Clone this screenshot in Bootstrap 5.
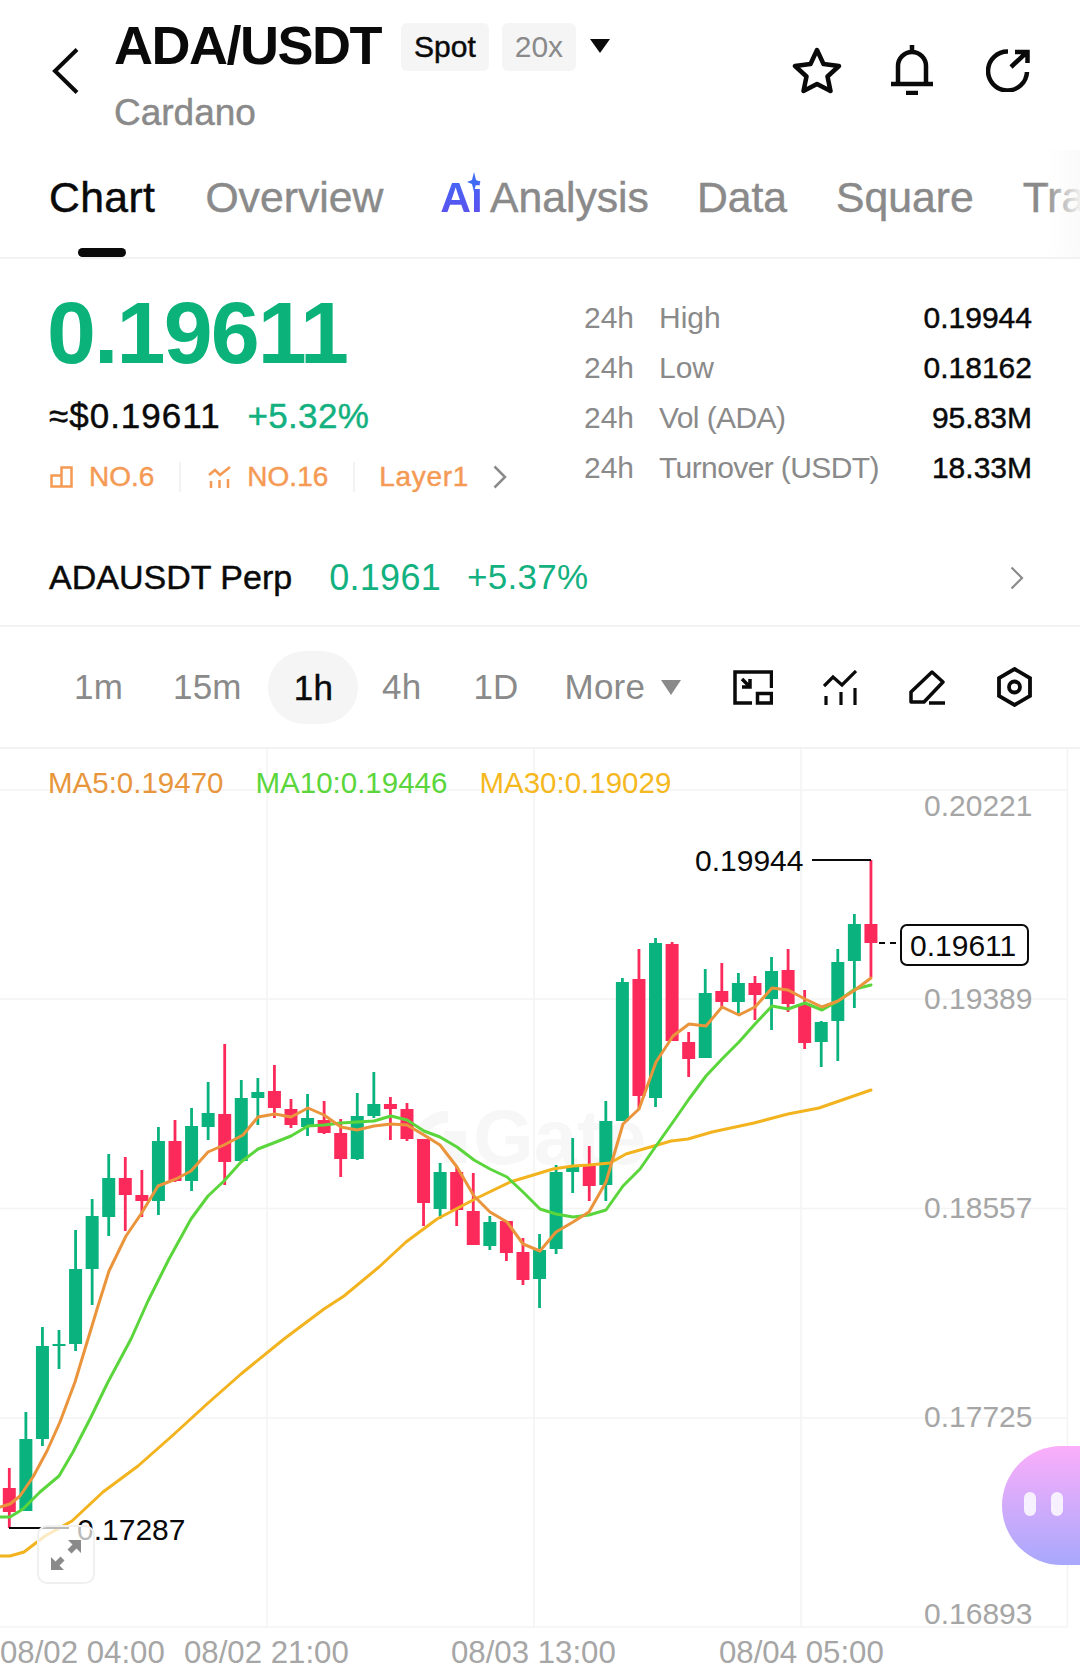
<!DOCTYPE html>
<html lang="en">
<head>
  <meta charset="UTF-8">
  <title>ADA/USDT</title>
  <link href="https://cdn.jsdelivr.net/npm/bootstrap@5.3.2/dist/css/bootstrap.min.css" rel="stylesheet">
  <style>
    body { background: #fff; color: #0a0a0a; font-family: "Liberation Sans", Arial, sans-serif; width: 1080px; height: 1671px; overflow: hidden; }
    .soft { -webkit-text-stroke: .45px currentColor; }
    .gray-t { color: #8a8a8a; }
    .up-t { color: #13b17f; }
    .hdr { height: 150px; padding: 15px 50px 0 52px; }
    .back-ic { margin: 33px 35px 0 0; }
    .pair { font-size: 54px; line-height: 60px; font-weight: 700; letter-spacing: -1.5px; margin: 0 20px 0 0; }
    .chip { background: #f5f5f5; border-radius: 6px; font-size: 30px; height: 48px; line-height: 48px; padding: 0 13px; margin-top: 3px; }
    .chip-gap { margin-left: 13px; }
    .chip-caret { margin: 2px 0 0 14px; }
    .coin { font-size: 37px; line-height: 40px; margin-top: 18px; }
    .hdr-icons { margin-top: 30px; gap: 49px; }
    .tab-bar { height: 109px; padding: 22px 0 0 49px; gap: 49px; border-bottom: 2px solid #f2f2f2; font-size: 42.7px; line-height: 50px; overflow: hidden; white-space: nowrap; }
    .tab-on { color: #0a0a0a; margin-right: 1px; letter-spacing: .4px; }
    .tab-on::after { content: ""; position: absolute; left: 29px; top: 76px; width: 48px; height: 9px; border-radius: 5px; background: #0a0a0a; }
    .ai-t { font-weight: 700; background: linear-gradient(180deg, #3f6cf5, #7a35e8); -webkit-background-clip: text; background-clip: text; color: transparent; margin: 0 7px 0 8px; }
    .ai-tab { margin-right: -1px; }
    .spark { left: 26px; top: 0; }
    .tab-fade { top: 0; right: 0; bottom: 0; width: 36px; background: linear-gradient(90deg, rgba(255,255,255,0), rgba(250,250,250,.9)); }
    .sum { height: 271px; padding: 30px 48px 0 47px; }
    .big-px { font-size: 88px; line-height: 88px; font-weight: 700; letter-spacing: -1.9px; color: #0bb27a; }
    .sub-px { font-size: 35px; line-height: 40px; margin-top: 19px; gap: 27px; padding-left: 2px; }
    .sub-px span:first-child { letter-spacing: 1px; }
    .sub-px span:last-child { letter-spacing: .3px; }
    .rank-row { font-size: 28px; line-height: 32px; margin-top: 25px; color: #f59a54; padding-left: 3px; }
    .rank-sep { width: 2px; height: 30px; background: #f3f3f3; margin: 0 27px 0 25px; }
    .layer-t { letter-spacing: .7px; margin-left: -3px; }
    .stats { width: 448px; margin-top: 4px; font-size: 30px; line-height: 50px; }
    .stat-k { width: 75px; }
    .stat-tight { letter-spacing: -.6px; }
    .perp { height: 95px; padding: 0 56px 0 49px; }
    .perp-name { font-size: 34px; margin-right: 37px; }
    .perp-num { font-size: 36px; margin-right: 26px; letter-spacing: .3px; }
    .perp-pct { font-size: 35px; letter-spacing: .3px; }
    .bar-box { height: 124px; border-top: 2px solid #f2f2f2; border-bottom: 2px solid #f2f2f2; padding: 0 48px 0 74px; font-size: 35px; letter-spacing: .2px; }
    .tf-list { gap: 52px; }
    .tf-second { margin-left: -2px; }
    .tf-on { background: #f5f5f5; border-radius: 37px; height: 73px; line-height: 73px; padding: 0 25px 0 26px; margin: 0 -28px 0 -26px; color: #0a0a0a; }
    .tf-more { margin-left: -6px; }
    .bar-icons { gap: 52px; }
    .bar-first { margin-right: -2px; }
    .chart-box { height: 921px; }
    .chart-box svg.plot { display: block; }
    .ma-row { top: 17px; left: 48px; gap: 32px; font-size: 29.5px; line-height: 34px; }
    .ma-a { color: #e8963c; }
    .ma-b { color: #5ad63c; }
    .ma-c { color: #f5b81e; }
    .zoom-btn { left: 37px; top: 776px; width: 58px; height: 59px; border: 2px solid #f0f0f0; border-radius: 10px; background: rgba(255,255,255,.72); }
    .bot-blob { right: -60px; top: 697px; width: 138px; height: 119px; border-radius: 60px; background: linear-gradient(180deg, #fbaefa, #a8a8fc); }
    .bot-eye { width: 12px; height: 24px; border-radius: 6px; background: #f6f0ff; }
    .bot-eyes { left: 22px; top: 46px; gap: 15px; }
  </style>
</head>
<body>

<header class="hdr d-flex align-items-start">
  <svg class="back-ic" width="27" height="46" viewBox="0 0 27 46" fill="none" stroke="#0a0a0a" stroke-width="4"><path d="M25 1.500 3 23l22 21.500"/></svg>
  <div>
    <div class="d-flex align-items-center">
      <h1 class="pair">ADA/USDT</h1>
      <span class="chip soft">Spot</span>
      <span class="chip chip-gap gray-t">20x</span>
      <svg class="chip-caret" width="20" height="14" viewBox="0 0 20 14"><path d="M0 0h20L10 14z" fill="#0a0a0a"/></svg>
    </div>
    <div class="coin gray-t soft">Cardano</div>
  </div>
  <div class="hdr-icons ms-auto d-flex align-items-center">
    <svg width="50" height="47" viewBox="0 0 50 47" fill="none" stroke="#0a0a0a" stroke-width="4.500" stroke-linejoin="round"><path d="M25 3l6.500 14L47 19 35.500 29.500 38.500 44 25 37l-13.500 7 3-14.500L3 19l15.500-2z"/></svg>
    <svg class="me-1" width="42" height="50" viewBox="0 0 42 50" fill="none" stroke="#0a0a0a" stroke-width="4.500"><path d="M7 38V21a14 14 0 0 1 28 0v17M0 39h42M21 0v6M15 48h12"/></svg>
    <svg width="44" height="44" viewBox="0 0 44 44" fill="none" stroke="#0a0a0a" stroke-width="4.500"><path d="M22 3.500A19.500 19.500 0 1 0 41 24M25 19 41 4M29 4h12.500v11"/></svg>
  </div>
</header>

<nav class="tab-bar d-flex position-relative gray-t">
  <span class="tab-on soft position-relative">Chart</span>
  <span class="soft">Overview</span>
  <span class="d-flex ai-tab">
    <span class="ai-t position-relative">Ai<svg class="spark position-absolute" width="16" height="20" viewBox="0 0 16 20"><path d="M8 0l2 8 5 2-5 2-2 8-2-8-5-2 5-2z" fill="#3f6cf5"/></svg></span>
    <span class="soft">Analysis</span>
  </span>
  <span class="soft">Data</span>
  <span class="soft">Square</span>
  <span class="soft">Tra</span>
  <div class="tab-fade position-absolute"></div>
</nav>

<section class="sum d-flex justify-content-between">
  <div>
    <div class="big-px">0.19611</div>
    <div class="sub-px d-flex">
      <span class="soft">≈$0.19611</span>
      <span class="up-t soft">+5.32%</span>
    </div>
    <div class="rank-row d-flex align-items-center">
      <svg class="me-3" width="23" height="22" viewBox="0 0 23 22" fill="none" stroke="#f59a54" stroke-width="2.500"><path d="M1.500 9.500h10v11h-10zM11.500 20.500V1.500h10v19h-10"/></svg>
      <span class="soft">NO.6</span>
      <span class="rank-sep"></span>
      <svg class="me-3" width="23" height="22" viewBox="0 0 23 22" fill="none" stroke="#f59a54" stroke-width="2.500"><path d="M1 9l6-5 5 5 10-8M3 15v7M11.500 14v8M20 13v9"/></svg>
      <span class="soft">NO.16</span>
      <span class="rank-sep"></span>
      <span class="soft layer-t">Layer1</span>
      <svg class="ms-4" width="14" height="24" viewBox="0 0 14 24" fill="none" stroke="#8a8a8a" stroke-width="2.500"><path d="M1.500 1.500 12 12 1.500 22.500"/></svg>
    </div>
  </div>
  <div class="stats">
    <div class="d-flex"><span class="stat-k gray-t">24h</span><span class="gray-t flex-grow-1">High</span><span class="soft">0.19944</span></div>
    <div class="d-flex"><span class="stat-k gray-t">24h</span><span class="gray-t flex-grow-1">Low</span><span class="soft">0.18162</span></div>
    <div class="d-flex"><span class="stat-k gray-t">24h</span><span class="gray-t flex-grow-1 stat-tight">Vol (ADA)</span><span class="soft">95.83M</span></div>
    <div class="d-flex"><span class="stat-k gray-t">24h</span><span class="gray-t flex-grow-1 stat-tight">Turnover (USDT)</span><span class="soft">18.33M</span></div>
  </div>
</section>

<section class="perp d-flex align-items-center">
  <span class="perp-name soft">ADAUSDT Perp</span>
  <span class="perp-num up-t">0.1961</span>
  <span class="perp-pct up-t">+5.37%</span>
  <svg class="ms-auto" width="14" height="24" viewBox="0 0 14 24" fill="none" stroke="#8a8a8a" stroke-width="2.200"><path d="M1.500 1.500 12 12 1.500 22.500"/></svg>
</section>

<section class="bar-box d-flex align-items-center gray-t">
  <div class="tf-list d-flex align-items-center">
    <span>1m</span>
    <span class="tf-second">15m</span>
    <span class="tf-on soft">1h</span>
    <span>4h</span>
    <span>1D</span>
    <span class="tf-more d-flex align-items-center">More<svg class="ms-3" width="20" height="15" viewBox="0 0 20 15"><path d="M0 0h20L10 15z" fill="#8a8a8a"/></svg></span>
  </div>
  <div class="bar-icons d-flex align-items-center ms-auto">
    <svg class="bar-first" width="40" height="35" viewBox="0 0 40 35" fill="none" stroke="#0a0a0a" stroke-width="3.500"><path d="M38.500 18V2H2v31h17M9 9l8 8M17 9v8H9"/><rect x="24.500" y="23.500" width="14" height="9.500"/></svg>
    <svg width="34" height="35" viewBox="0 0 34 35" fill="none" stroke="#0a0a0a" stroke-width="3.200"><path d="M1 16l9-9 9 8L33 1M3 26v9M18 22v13M32 18v17"/></svg>
    <svg width="36" height="35" viewBox="0 0 36 35" fill="none" stroke="#0a0a0a" stroke-width="3.500" stroke-linejoin="round"><path d="M23 2l11 10-19 20H2V22zM20 33h16"/></svg>
    <svg width="35" height="40" viewBox="0 0 35 40" fill="none" stroke="#0a0a0a" stroke-width="3.800"><path d="M17.500 2 33 11v18l-15.500 9L2 29V11z"/><circle cx="17.500" cy="20" r="5.500"/></svg>
  </div>
</section>

<section class="chart-box position-relative">
  <svg class="plot" id="plot" width="1080" height="921" viewBox="0 750 1080 921" font-family="Liberation Sans, Arial, sans-serif">
    <g stroke="#f4f4f4" stroke-width="1.500">
      <path d="M0 791H1067M0 1000H1067M0 1209.500H1067M0 1419H1067M0 1628H1067"/>
      <path d="M267 750V1628M534 750V1628M801 750V1628M1067.500 750V1628"/>
    </g>
    <g fill="#f7f7f7">
      <path d="M448 1112a32 32 0 0 0-34 30l12 2a20 20 0 0 1 22-20zM444 1132h22v32h-22z"/>
      <text x="473" y="1165" font-size="78" font-weight="700">Gate</text>
    </g>
    <g id="candles"></g>
    <g id="lines" fill="none" stroke-width="3" stroke-linejoin="round" stroke-linecap="round"></g>
    <g font-size="30" fill="#a6a6a6">
      <text x="924" y="817">0.20221</text>
      <text x="924" y="1010">0.19389</text>
      <text x="924" y="1219">0.18557</text>
      <text x="924" y="1428">0.17725</text>
      <text x="924" y="1625">0.16893</text>
    </g>
    <g font-size="31.200" fill="#a6a6a6">
      <text x="0" y="1664">08/02 04:00</text>
      <text x="184" y="1664">08/02 21:00</text>
      <text x="451" y="1664">08/03 13:00</text>
      <text x="719" y="1664">08/04 05:00</text>
    </g>
    <g font-size="30" fill="#0a0a0a">
      <text x="695" y="872">0.19944</text>
      <text x="77" y="1541">0.17287</text>
      <text x="910" y="957">0.19611</text>
    </g>
    <g fill="none" stroke="#0a0a0a" stroke-width="2">
      <path d="M812 861H871M9 1529H69"/>
      <path d="M879 944H898" stroke-dasharray="6 5"/>
      <rect x="901" y="926" width="127" height="40" rx="6"/>
    </g>
  </svg>
  <div class="ma-row position-absolute d-flex">
    <span class="ma-a">MA5:0.19470</span>
    <span class="ma-b">MA10:0.19446</span>
    <span class="ma-c">MA30:0.19029</span>
  </div>
  <div class="zoom-btn position-absolute d-flex align-items-center justify-content-center">
    <svg width="30" height="30" viewBox="0 0 30 30" fill="#8a8a8a"><path d="M17 0h13v13l-4.500-4.500-5 5-4-4 5-5zM13 30H0V17l4.500 4.500 5-5 4 4-5 5z"/></svg>
  </div>
  <div class="bot-blob position-absolute">
    <div class="bot-eyes position-absolute d-flex">
      <span class="bot-eye"></span>
      <span class="bot-eye"></span>
    </div>
  </div>
</section>

<script>
  // type, wick top, body top, body bottom, wick bottom
  const bars = [
    ['r',1469,1489,1513,1529],['g',1413,1440,1512,1512],['g',1328,1347,1440,1447],['g',1331,1345,1347,1370],
    ['g',1231,1270,1345,1352],['g',1200,1217,1270,1306],['g',1155,1179,1218,1237],['r',1158,1179,1196,1232],
    ['r',1171,1196,1202,1218],['g',1128,1142,1202,1216],['r',1121,1142,1182,1183],['g',1109,1127,1182,1192],
    ['g',1083,1114,1128,1141],['r',1045,1115,1163,1186],['g',1081,1099,1162,1162],['g',1079,1093,1099,1126],
    ['r',1066,1092,1109,1119],['r',1100,1110,1126,1129],['g',1095,1119,1128,1137],['r',1102,1121,1134,1135],
    ['r',1120,1134,1160,1178],['g',1094,1117,1160,1161],['g',1073,1105,1117,1119],['r',1098,1105,1110,1141],
    ['r',1104,1110,1140,1142],['r',1140,1140,1204,1227],['g',1164,1173,1210,1220],['r',1168,1173,1211,1227],
    ['r',1174,1212,1246,1246],['g',1217,1223,1247,1251],['r',1222,1222,1254,1262],['r',1239,1253,1281,1286],
    ['g',1235,1251,1280,1309],['g',1166,1173,1250,1255],['g',1139,1167,1173,1194],['r',1147,1167,1187,1202],
    ['g',1102,1122,1186,1202],['g',979,983,1122,1122],['r',950,980,1097,1110],['g',939,944,1099,1108],
    ['r',943,945,1042,1042],['r',1033,1043,1060,1078],['g',970,994,1059,1059],['r',964,992,1003,1010],
    ['g',974,984,1003,1014],['r',977,984,996,1021],['g',958,972,1000,1031],['r',950,971,1005,1013],
    ['r',991,1006,1044,1050],['g',1022,1023,1043,1068],['g',950,963,1022,1062],['g',915,925,962,1009],
    ['r',861,925,944,978]
  ];
  const ma5 = '0,1508 10,1505 20,1497 33,1478 47,1452 60,1423 75,1383 88,1340 98,1307 109,1272 126,1237 141,1215 158,1187 176,1180 191,1172 208,1153 224,1146 243,1136 258,1118 275,1115 291,1118 308,1109 324,1116 341,1128 357,1131 374,1127 391,1125 407,1126 424,1136 440,1146 457,1168 474,1197 490,1213 507,1223 523,1245 540,1252 556,1233 573,1223 589,1213 606,1183 623,1125 639,1110 656,1063 673,1037 689,1025 706,1027 722,1008 739,1016 755,1008 772,989 788,991 805,1000 822,1008 838,1002 855,991 871,979';
  const ma10 = '0,1518 10,1518 23,1510 40,1493 59,1477 73,1453 90,1420 108,1383 131,1340 148,1302 169,1260 191,1220 208,1197 224,1182 241,1163 258,1150 276,1143 291,1137 308,1127 324,1126 341,1124 357,1123 374,1122 391,1117 407,1121 424,1132 440,1138 457,1148 474,1161 490,1170 507,1178 523,1193 540,1210 556,1215 573,1218 589,1216 606,1211 623,1187 640,1170 656,1147 673,1123 689,1100 706,1077 722,1060 739,1043 755,1025 772,1007 788,1010 805,1004 822,1011 838,1002 855,990 871,986';
  const ma30 = '0,1557 10,1557 24,1553 45,1537 72,1522 103,1493 138,1467 172,1437 207,1405 241,1375 284,1340 324,1310 344,1297 379,1268 406,1243 437,1220 475,1200 510,1183 530,1177 553,1170 573,1167 589,1166 610,1164 626,1155 654,1147 671,1142 688,1140 712,1133 754,1124 788,1115 819,1109 871,1091';

  let html = '';
  bars.forEach(function (b, i) {
    const x = 9.3 + 16.57 * i;
    const col = b[0] === 'g' ? '#0ab27d' : '#fb2a5b';
    html += `<rect x="${x - 1.4}" y="${b[1]}" width="2.800" height="${b[4] - b[1]}" fill="${col}"/>`;
    html += `<rect x="${x - 6.5}" y="${b[2]}" width="13" height="${b[3] - b[2]}" fill="${col}"/>`;
  });
  document.getElementById('candles').innerHTML = html;
  document.getElementById('lines').innerHTML =
    `<polyline points="${ma30}" stroke="#f2b31f"/><polyline points="${ma10}" stroke="#5ad63c"/><polyline points="${ma5}" stroke="#ea943c"/>`;
</script>

<script src="https://cdn.jsdelivr.net/npm/bootstrap@5.3.2/dist/js/bootstrap.bundle.min.js"></script>
</body>
</html>
